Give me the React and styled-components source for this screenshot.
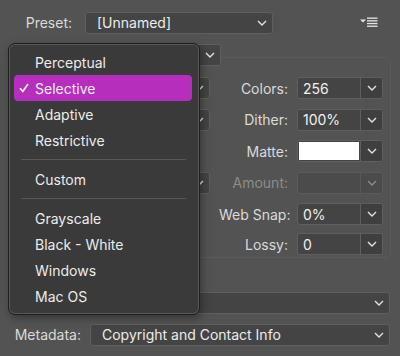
import styled, { createGlobalStyle } from "styled-components"

const GlobalStyle = createGlobalStyle`
  body {
    margin: 0;
    background: #535353;
    font-family: Inter, "Liberation Sans", sans-serif;
    -webkit-font-smoothing: antialiased;
  }
`

const Page = styled.div`
  position: relative;
  width: 400px;
  height: 356px;
  overflow: hidden;
  background: #535353;
  color: #e6e6e6;
  font-size: 14px;
`

const HeaderRow = styled.div`
  display: flex;
  align-items: center;
  padding-top: 11px;
  height: 23px;
`

const Label = styled.div`
  width: ${p => p.w || 72}px;
  flex: none;
  text-align: right;
  color: ${p => (p.disabled ? "#8c8c8c" : "#dadada")};
  white-space: nowrap;
`

const Select = styled.div`
  display: flex;
  align-items: center;
  justify-content: ${p => (p.empty ? "flex-end" : "space-between")};
  box-sizing: border-box;
  width: ${p => (p.w ? `${p.w}px` : "auto")};
  flex: ${p => (p.w ? "none" : "1")};
  height: ${p => p.h || 22}px;
  margin-left: ${p => p.ml || 0}px;
  padding: 0 5px 0 ${p => p.pl || 11}px;
  background: #444444;
  border: 1px solid #5f5f5f;
  border-radius: 3px;
  color: #ececec;
  white-space: nowrap;
`

const MenuButton = styled.div`
  margin-left: auto;
  margin-right: 22px;
  display: flex;
`

const Group = styled.div`
  margin: 23px 9px 0 8px;
  height: 201px;
  box-sizing: border-box;
  border: 1px solid #5b5b5b;
  border-radius: 5px;
  padding: 0 7px 5px 9px;
`

const Legend = styled(Select)`
  margin-top: -14px;
  width: 203px;
`

const Grid = styled.div`
  display: grid;
  grid-template-columns: 192px 1fr 86px;
  grid-auto-rows: 22px;
  column-gap: 9px;
  row-gap: 9.5px;
  margin-top: 11px;
  align-items: center;
`

const Cell = styled.div`
  margin-top: ${p => p.pull || 0}px;
  display: flex;
  align-items: center;
  justify-content: ${p => (p.right ? "flex-end" : "stretch")};
  height: 100%;
`

const Combo = styled.div`
  display: flex;
  box-sizing: border-box;
  height: 22px;
  margin-top: ${p => p.pull || 0}px;
  border: 1px solid ${p => (p.disabled ? "#5a5a5a" : "#5f5f5f")};
  border-radius: 3px;
  background: ${p => (p.disabled ? "#4b4b4b" : "#444444")};
  overflow: hidden;
`

const ComboValue = styled.div`
  flex: 1;
  display: flex;
  align-items: center;
  padding-left: 5px;
  color: #f0f0f0;
`

const Swatch = styled.div`
  flex: 1;
  margin: 1px;
  background: #ffffff;
`

const ComboArrow = styled.div`
  width: 21px;
  display: flex;
  align-items: center;
  justify-content: center;
  border-left: 1px solid ${p => (p.disabled ? "#5a5a5a" : "#5f5f5f")};
  background: ${p => (p.disabled ? "#4b4b4b" : "#3f3f3f")};
`

const Checkbox = styled.div`
  width: 12px;
  height: 12px;
  border: 1px solid #6a6a6a;
  border-radius: 3px;
  background: #444;
`

const FieldRow = styled.div`
  display: flex;
  align-items: center;
  gap: 9px;
  margin: ${p => p.mt || 0}px 10px 0 0;
  height: 21px;
`

const Menu = styled.div`
  position: absolute;
  left: 8px;
  top: 43px;
  width: 192px;
  height: 272px;
  box-sizing: border-box;
  padding: 5px 7px 6px 5px;
  background: #3a3a3a;
  border: 1px solid #1e1e1e;
  border-radius: 7px;
  box-shadow: inset 0 0 0 1px #595959, 2px 3px 8px rgba(0, 0, 0, 0.35);
  z-index: 2;
`

const Item = styled.div`
  display: flex;
  align-items: center;
  height: 26px;
  padding-left: 21px;
  position: relative;
  border-radius: 4px;
  background: ${p => (p.active ? "#b52fbc" : "transparent")};
  color: #ececec;
  font-size: 14px;
`

const Check = styled.svg`
  position: absolute;
  left: 5px;
  top: 8px;
`

const Separator = styled.div`
  height: 13px;
  display: flex;
  align-items: center;
  padding: 0 6px 0 7px;
  &::after {
    content: "";
    flex: 1;
    height: 1px;
    background: #575757;
  }
`

const Chevron = ({ dim }) => (
  <svg width="10" height="6" viewBox="0 0 10 6">
    <path d="M1 1 L5 5 L9 1" fill="none" stroke={dim ? "#8a8a8a" : "#e2e2e2"} strokeWidth="1.4" />
  </svg>
)

const ComboBox = ({ value, swatch, disabled, pull }) => (
  <Combo disabled={disabled} pull={pull}>
    {swatch ? <Swatch /> : <ComboValue>{value}</ComboValue>}
    <ComboArrow disabled={disabled}>
      <Chevron dim={disabled} />
    </ComboArrow>
  </Combo>
)

// left-column controls sit under the open menu, only their right edges show
const rows = [
  { left: "select", label: "Colors:", value: "256" },
  { left: "select", label: "Dither:", value: "100%" },
  { left: "check", label: "Matte:", swatch: true },
  { left: "select", label: "Amount:", value: "", disabled: true },
  { left: "check", label: "Web Snap:", value: "0%" },
  { left: null, label: "Lossy:", value: "0", pull: -3 },
]

const menuItems = [
  ["Perceptual"],
  ["Selective", true],
  ["Adaptive"],
  ["Restrictive"],
  null,
  ["Custom"],
  null,
  ["Grayscale"],
  ["Black - White"],
  ["Windows"],
  ["Mac OS"],
]

const App = () => {
  return (
    <Page>
      <GlobalStyle />
      <HeaderRow>
        <Label>Preset:</Label>
        <Select w={188} ml={13}>
          [Unnamed]
          <Chevron />
        </Select>
        <MenuButton>
          <svg width="18" height="11" viewBox="0 0 18 11">
            <path d="M0 2.5 H6 L3 5.5 Z" fill="#e6e6e6" />
            <rect x="7" y="0.5" width="10.5" height="1.3" fill="#e6e6e6" />
            <rect x="7" y="3.2" width="10.5" height="1.3" fill="#e6e6e6" />
            <rect x="7" y="5.9" width="10.5" height="1.3" fill="#e6e6e6" />
            <rect x="7" y="8.6" width="10.5" height="1.3" fill="#e6e6e6" />
          </svg>
        </MenuButton>
      </HeaderRow>

      <Group>
        <Legend empty>
          <Chevron />
        </Legend>
        <Grid>
          {rows.map((r, i) => [
            <Cell key={`l${i}`} pull={r.pull}>
              {r.left === "select" && (
                <Select empty>
                  <Chevron />
                </Select>
              )}
              {r.left === "check" && <Checkbox />}
            </Cell>,
            <Cell key={`m${i}`} right pull={r.pull}>
              <Label as="span" w={69} disabled={r.disabled}>{r.label}</Label>
            </Cell>,
            <ComboBox key={`c${i}`} value={r.value} swatch={r.swatch} disabled={r.disabled} pull={r.pull} />,
          ])}
        </Grid>
      </Group>

      <FieldRow mt={34}>
        <Label w={81} />
        <Select empty>
          <Chevron />
        </Select>
      </FieldRow>
      <FieldRow mt={11}>
        <Label w={81}>Metadata:</Label>
        <Select>
          Copyright and Contact Info
          <Chevron />
        </Select>
      </FieldRow>

      <Menu>
        {menuItems.map((m, i) =>
          m ? (
            <Item key={i} active={m[1]}>
              {m[1] && (
                <Check width="10" height="10" viewBox="0 0 10 10">
                  <path d="M1 5.2 L3.8 8.4 L9 1" fill="none" stroke="#fff" strokeWidth="1.6" />
                </Check>
              )}
              {m[0]}
            </Item>
          ) : (
            <Separator key={i} />
          )
        )}
      </Menu>
    </Page>
  )
}

export default App
